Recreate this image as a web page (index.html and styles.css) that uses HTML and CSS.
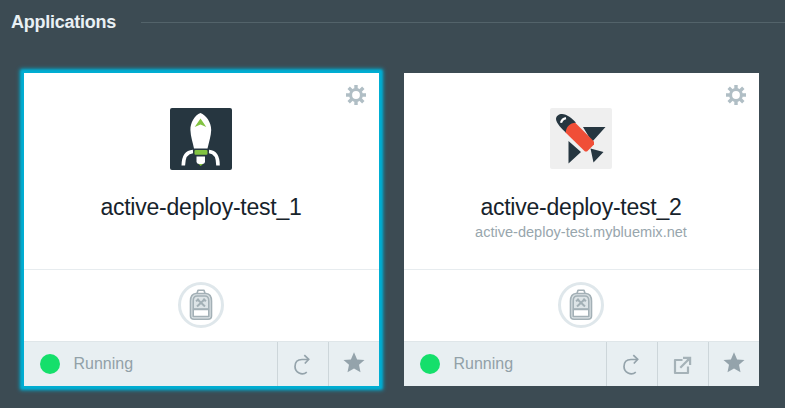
FILE: index.html
```html
<!DOCTYPE html>
<html lang="en">
<head>
<meta charset="utf-8">
<title>Applications</title>
<link rel="stylesheet" href="styles.css">
</head>
<body>
<svg class="symbols" aria-hidden="true">
  <symbol id="gear" viewBox="0 0 20 20">
    <g fill="none" stroke="currentColor"><circle cx="10" cy="10" r="5.4" stroke-width="3"/>
    <path stroke-width="3.4" d="M10 0v4M10 16v4M0 10h4M16 10h4M2.7 2.7l3 3M14.3 14.3l3 3M17.3 2.7l-3 3M5.7 14.3l-3 3"/></g>
  </symbol>
  <symbol id="backpack" viewBox="0 0 24 32">
    <g fill="none" stroke="#a3b0b6" stroke-width="1.6" stroke-linejoin="round">
      <path fill="#dce3e6" d="M5 30.3Q1.5 30.3 1.5 27V12Q1.5 5 7 4.5H17Q22.5 5 22.5 12V27Q22.5 30.3 19 30.3Z"/>
      <path d="M8 4.5L9 1.2H15L16 4.5" />
      <path fill="#dde4e7" d="M4.2 20V12Q4.2 7 8 7H16Q19.8 7 19.8 12V20Z"/>
      <path fill="#fff" d="M4.2 20.5H19.8V27.5H4.2Z"/>
      <path stroke-width="2" d="M8 10l8 7.5M16 10l-8 7.5M7 12.2l3-2.2M14.3 9.7l2.6 2.6"/>
    </g>
  </symbol>
  <symbol id="restart" viewBox="0 0 18 21">
    <g fill="none" stroke="currentColor" stroke-width="1.7"><path d="M13.8 18.1A7.2 7.2 0 0 1 2 12.5Q2 5.5 9 5.5H15.5"/><path d="M11.3 1.2L15.7 5.4L11.8 9.5"/></g>
  </symbol>
  <symbol id="star" viewBox="0 0 22 21">
    <path fill="currentColor" d="M11 .3L14.1 7.5L21.5 8L16 12.8L17.5 20.2L11 16.5L4.5 20.2L6 12.8L.5 8L7.9 7.5Z"/>
  </symbol>
  <symbol id="launch" viewBox="0 0 19 19">
    <path fill="none" stroke="currentColor" stroke-width="2.2" stroke-linejoin="round" d="M9.5 4H2V17H15V10.5M7.3 11.7L16 3"/>
    <path fill="currentColor" d="M10 .8H18.2V9H16V5.5L13.5 3H10Z"/>
  </symbol>
</svg>
<header class="heading"><h1>Applications</h1><span class="rule"></span></header>
<main class="cards">
  <article class="card selected">
    <section class="summary">
      <svg class="gear"><use href="#gear"/></svg>
      <svg class="logo" viewBox="0 0 62 62">
        <rect width="62" height="62" rx="2" fill="#263640"/>
        <path fill="#fff" d="M30.5 5C24.5 7 20.3 15 20.4 22C20.6 29 23 35 24 40.5H37.5C39 34 41 28 41.2 22C41.2 14 36 7 30.5 5Z"/>
        <path fill="#82c341" d="M30.5 10.5L36.3 19L30.5 16.5L24.7 19Z"/>
        <rect x="24.5" y="42" width="13" height="4.7" rx="1" fill="#82c341"/>
        <path fill="none" stroke="#fff" stroke-width="3.6" d="M23 43.5Q13.5 44 13.3 57.5M39 43.5Q48 44 48 57.5"/>
        <path fill="#fff" d="M26.5 48.5H35V54Q34.5 56 32.5 56H29Q27 56 26.5 54Z"/><path fill="#82c341" d="M28.5 56H33L30.7 58Z"/>
      </svg>
      <h2>active-deploy-test_1</h2>
    </section>
    <section class="runtime"><span class="badge"><svg><use href="#backpack"/></svg></span></section>
    <footer>
      <span class="status"><i class="dot"></i>Running</span>
      <span class="action restart"><svg><use href="#restart"/></svg></span>
      <span class="action star"><svg><use href="#star"/></svg></span>
    </footer>
  </article>
  <article class="card">
    <section class="summary">
      <svg class="gear"><use href="#gear"/></svg>
      <svg class="logo" viewBox="0 0 62 62">
        <rect width="62" height="61" rx="2" fill="#efefef"/>
        <path fill="#263640" d="M33 19H55.5L42 34ZM18.5 33L31 44L18.5 55.5ZM40.5 40.5L53.5 44L43.5 54.5Z"/>
        <path fill="#f04e37" d="M15.5 24.5Q14 16 24.5 14L44 33.5V36.5L37 43.5H35Z"/>
        <path fill="#263640" d="M15.8 24.5C12 21 6 15 6 11C6 8 9 6 12 6C17 6 22 10.5 26 14.7C20 14.5 16 19 15.8 24.5Z"/>
        <path fill="none" stroke="#fff" stroke-width="2.2" d="M11 14.8Q12 11 16 10.2"/>
      </svg>
      <h2>active-deploy-test_2</h2>
      <p>active-deploy-test.mybluemix.net</p>
    </section>
    <section class="runtime"><span class="badge"><svg><use href="#backpack"/></svg></span></section>
    <footer>
      <span class="status"><i class="dot"></i>Running</span>
      <span class="action restart"><svg><use href="#restart"/></svg></span>
      <span class="action launch"><svg><use href="#launch"/></svg></span>
      <span class="action star"><svg><use href="#star"/></svg></span>
    </footer>
  </article>
</main>
</body>
</html>
```
FILE: styles.css
```css
* { box-sizing: border-box; }
body { margin: 0; height: 408px; overflow: hidden; background: #3c4b53; font-family: "Liberation Sans", Arial, sans-serif; }
svg { display: block; }
.symbols { position: absolute; width: 0; height: 0; }
.heading { display: flex; align-items: center; height: 44px; padding-left: 11px; }
h1 { width: 130px; margin: 0; color: #e9f0f4; font-size: 18px; line-height: 20px; font-weight: 700; letter-spacing: -.25px; }
.rule { flex: 1; height: 1px; background: #53636a; }
.cards { display: flex; gap: 25px; padding: 29px 0 0 24px; }
.card { flex: none; width: 355px; height: 313px; background: #fff; }
.selected { box-shadow: 0 0 4px 4px #00aed3, 0 0 2px 3px #00aed3; }
.summary { position: relative; display: flex; flex-direction: column; align-items: center; height: 197px; padding: 35px 1px 0 0; border-bottom: 1px solid #e7ecef; }
.gear { position: absolute; top: 12px; right: 13px; width: 20px; height: 20px; color: #b0bec5; }
.logo { width: 62px; height: 62px; }
h2 { margin: 23px 0 0; color: #17232b; font-size: 23px; line-height: 28px; font-weight: 400; letter-spacing: -.23px; white-space: nowrap; }
p { margin: 3px 0 0; color: #98a6ad; font-size: 14.55px; line-height: 16px; }
.runtime { display: flex; justify-content: center; height: 71px; padding: 12px 1px 0 0; }
.badge { display: flex; align-items: center; justify-content: center; width: 46px; height: 46px; border: 3px solid #dfe7eb; border-radius: 50%; }
.badge svg { width: 24px; height: 32px; }
footer { display: flex; height: 46px; background: #e8eff2; border-top: 1px solid #dfe6e9; height: 45px; }
.status { display: flex; flex: 1; align-items: center; padding-left: 16px; color: #92a1a8; font-size: 16px; line-height: 20px; }
.dot { width: 20px; height: 20px; margin-right: 13.5px; border-radius: 50%; background: #14df6b; }
.action { width: 51px; border-left: 1px solid #cdd6da; color: #94a3ab; }
.restart svg { width: 18px; height: 21px; margin: 12px 0 0 15px; }
.star svg { width: 22px; height: 21px; margin: 10px 0 0 14px; }
.launch svg { width: 19px; height: 19px; margin: 14px 0 0 15px; color: #a5b2b8; }
```
